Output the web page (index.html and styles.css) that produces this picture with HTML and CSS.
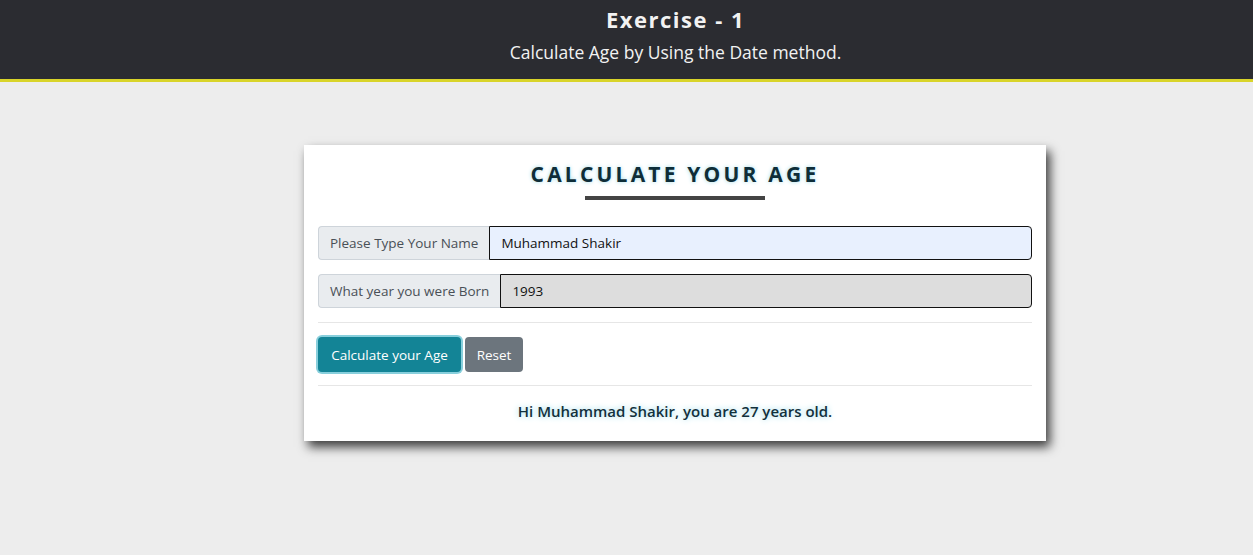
FILE: index.html
```html
<!DOCTYPE html>
<html>
<head>
<meta charset="utf-8">
<link rel="stylesheet" href="styles.css">
</head>
<body>
<header class="top">
  <h1 class="top-title">Exercise - 1</h1>
  <p class="top-sub">Calculate Age by Using the Date method.</p>
</header>
<main class="main">
  <section class="card">
    <h2 class="card-title">CALCULATE YOUR AGE</h2>
    <div class="bar"></div>
    <div class="group">
      <span class="addon">Please Type Your Name</span>
      <div class="field field-name">Muhammad Shakir</div>
    </div>
    <div class="group">
      <span class="addon">What year you were Born</span>
      <div class="field field-year">1993</div>
    </div>
    <hr class="rule">
    <div class="buttons">
      <button class="btn btn-info">Calculate your Age</button>
      <button class="btn btn-gray">Reset</button>
    </div>
    <hr class="rule">
    <p class="result">Hi Muhammad Shakir, you are 27 years old.</p>
  </section>
</main>
</body>
</html>
```
FILE: styles.css
```css
* { box-sizing: border-box; }
html, body { margin: 0; padding: 0; }
body {
  background: #ededed;
  font-family: "Open Sans", "Noto Sans", sans-serif;
  width: 1253px;
  height: 555px;
  overflow: hidden;
}
.top {
  background: #2b2c31;
  border-bottom: 3px solid #d9d42a;
  height: 82px;
  padding-left: 98px;
  text-align: center;
  color: #f2f2f2;
}
.top-title {
  margin: 0;
  padding-top: 4px;
  font-size: 22px;
  font-weight: 700;
  letter-spacing: 1.5px;
  line-height: 30px;
}
.top-sub {
  margin: 3px 0 0;
  font-size: 17.5px;
  line-height: 30px;
}
.main {
  padding: 63px 0 0 97px;
  display: flex;
  justify-content: center;
}
.card {
  width: 742px;
  background: #fff;
  padding: 14px 14px 19px;
  box-shadow: 4px 6px 10px rgba(0,0,0,0.75);
}
.card-title {
  margin: 0;
  text-align: center;
  font-size: 21px;
  font-weight: 700;
  letter-spacing: 3.2px;
  color: #0e2d38;
  line-height: 30px;
  text-shadow: 0 0 4px #9fdbe8;
}
.bar {
  width: 180px;
  height: 4px;
  background: #444;
  margin: 7px auto 26px;
}
.group {
  display: flex;
  height: 34px;
  margin-bottom: 14px;
}
.addon {
  display: flex;
  align-items: center;
  padding: 0 11px;
  background: #e9ecef;
  border: 1px solid #ced4da;
  border-right: none;
  border-radius: 4px 0 0 4px;
  font-size: 13.5px;
  color: #495057;
  white-space: nowrap;
}
.field {
  flex: 1;
  display: flex;
  align-items: center;
  padding: 0 11px;
  border: 1px solid #111;
  border-radius: 0 4px 4px 0;
  font-size: 13.5px;
  color: #111;
}
.field-name { background: #e8f0fe; }
.field-year { background: #dddddd; }
.rule {
  border: none;
  border-top: 1px solid #e6e6e6;
  margin: 0 0 14px;
}
.buttons {
  display: flex;
  gap: 4px;
  margin-bottom: 13px;
}
.btn {
  height: 35px;
  border: none;
  border-radius: 4px;
  color: #fff;
  font-family: inherit;
  font-size: 13.5px;
  padding: 0;
  white-space: nowrap;
}
.btn-info {
  width: 143px;
  background: #138496;
  box-shadow: 0 0 0 2px #88cfdc;
}
.btn-gray { width: 58px; background: #6c757d; }
.result {
  margin: 0;
  text-align: center;
  font-size: 15px;
  font-weight: 600;
  line-height: 22px;
  color: #12303c;
  text-shadow: 0 0 6px #8fd6e6;
}
```
